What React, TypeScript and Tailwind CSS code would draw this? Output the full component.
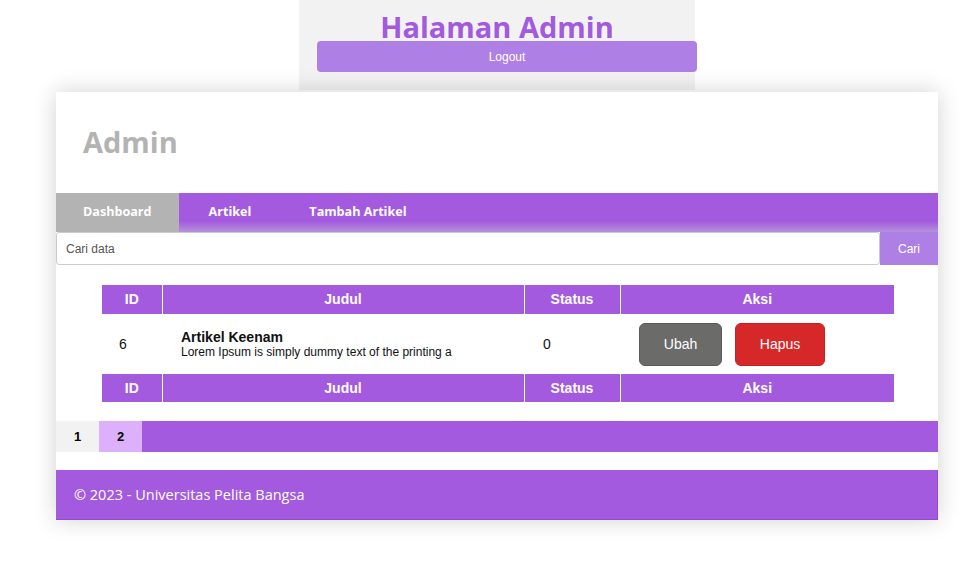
import React from 'react';

const cols = ['ID', 'Judul', 'Status', 'Aksi'];

const HeadRow: React.FC<{ h: string }> = ({ h }) => (
  <tr className={`bg-[#a35ade] text-white font-bold text-[14px] ${h}`}>
    {cols.map((c) => (
      <th key={c} className="border-x border-white first:border-l-0 last:border-r-0 font-bold">
        {c}
      </th>
    ))}
  </tr>
);

const App: React.FC = () => {
  return (
    <div className="w-[971px] h-[580px] bg-white overflow-hidden font-['Liberation_Sans',Arial,sans-serif]">
      {/* Header */}
      <div className="ml-[299px] w-[396px] h-[90px] bg-[#f2f2f2] pt-[8px]">
        <h1 className="text-center text-[29px] leading-[38px] font-bold text-[#a35ade] font-['Open_Sans',sans-serif]">
          Halaman Admin
        </h1>
        <button className="mt-[-4px] ml-[18px] w-[380px] h-[31px] rounded bg-[#ae80e6] text-white text-[12px] relative top-[-2px] pt-[1px]">
          Logout
        </button>
      </div>

      {/* Main card */}
      <div className="ml-[56px] mt-[2px] w-[882px] bg-white shadow-[0_0_22px_rgba(0,0,0,0.18)]">
        <div className="h-[101px] flex items-center px-[27px] pb-[2px]">
          <h2 className="text-[29px] font-bold text-[#b3b3b3] font-['Open_Sans',sans-serif]">Admin</h2>
        </div>

        {/* Nav */}
        <nav className="h-[39px] flex bg-[linear-gradient(to_bottom,#a35ade_0%,#a35ade_72%,#b592da_100%)] font-['Open_Sans',sans-serif] font-bold text-[12.6px] text-white">
          <a className="bg-[#b3b3b3] px-[27px] flex items-center">Dashboard</a>
          <a className="px-[30px] flex items-center">Artikel</a>
          <a className="px-[28px] flex items-center">Tambah Artikel</a>
        </nav>

        {/* Search */}
        <div className="flex h-[33px]">
          <input
            placeholder="Cari data"
            className="flex-1 border border-[#cccccc] rounded-[3px] px-[9px] text-[12px] text-[#555] placeholder:text-[#555] outline-none"
          />
          <button className="w-[58px] bg-[#ae80e6] text-white text-[12px]">Cari</button>
        </div>

        {/* Table */}
        <div className="px-[46px] pt-[20px]">
          <table className="w-[792px] border-collapse">
            <colgroup>
              <col className="w-[60px]" />
              <col className="w-[362px]" />
              <col className="w-[96px]" />
              <col />
            </colgroup>
            <thead>
              <HeadRow h="h-[29px]" />
            </thead>
            <tbody>
              <tr className="h-[60px] text-[#111]">
                <td className="pl-[17px] text-[14px]">6</td>
                <td className="pl-[19px]">
                  <div className="font-bold text-[14px] leading-[16px]">Artikel Keenam</div>
                  <div className="text-[12px] leading-[15px]">Lorem Ipsum is simply dummy text of the printing a</div>
                </td>
                <td className="pl-[19px] text-[14px]">0</td>
                <td className="pl-[19px]">
                  <div className="flex gap-[13px]">
                    <button className="w-[83px] h-[43px] rounded-[6px] bg-[#6b6c6a] border border-[#5a5b59] text-white text-[14px]">
                      Ubah
                    </button>
                    <button className="w-[90px] h-[43px] rounded-[6px] bg-[#d62829] border border-[#c42324] text-white text-[14px]">
                      Hapus
                    </button>
                  </div>
                </td>
              </tr>
            </tbody>
            <tfoot>
              <HeadRow h="h-[28px]" />
            </tfoot>
          </table>
        </div>

        {/* Pagination */}
        <div className="mt-[19px] h-[31px] flex bg-[#a35ade] text-[13px] font-bold text-black">
          <a className="w-[43px] bg-[#f2f2f2] flex items-center justify-center">1</a>
          <a className="w-[43px] bg-[#dcb0fb] flex items-center justify-center">2</a>
        </div>

        {/* Footer */}
        <footer className="mt-[18px] h-[50px] bg-[#a35ade] border-b border-r border-[#9648d6] flex items-center px-[18px] text-white text-[14.5px] font-['Open_Sans',sans-serif]">
          © 2023 - Universitas Pelita Bangsa
        </footer>
      </div>
    </div>
  );
};

export default App;
